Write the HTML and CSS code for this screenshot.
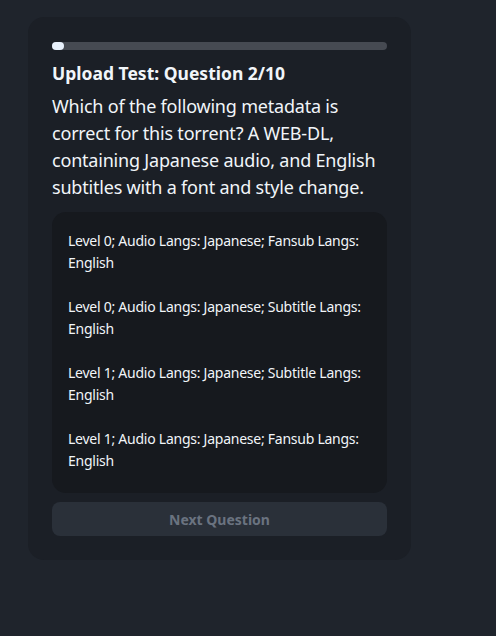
FILE: index.html
```html
<!DOCTYPE html>
<html lang="en">

<head>
    <meta charset="UTF-8" />
    <title>Upload Test</title>
    <link rel="stylesheet" href="styles.css">
</head>

<body>
    <div class="quiz-card">
        <!-- Progress through the test -->
        <div class="progress">
            <div class="progress-fill"></div>
        </div>

        <h2 class="quiz-title">Upload Test: Question 2/10</h2>
        <p class="quiz-question">Which of the following metadata is correct for this torrent? A WEB-DL, containing Japanese audio, and English subtitles with a font and style change.</p>

        <div class="answers">
            <div class="answer">Level 0; Audio Langs: Japanese; Fansub Langs: English</div>
            <div class="answer">Level 0; Audio Langs: Japanese; Subtitle Langs: English</div>
            <div class="answer">Level 1; Audio Langs: Japanese; Subtitle Langs: English</div>
            <div class="answer">Level 1; Audio Langs: Japanese; Fansub Langs: English</div>
        </div>

        <button class="next-btn" disabled>Next Question</button>
    </div>
</body>

</html>
```

FILE: styles.css
```css
html,
body {
    margin: 0;
    padding: 0;
    height: 100%;
    background: #1f242c;
    font-family: 'Noto Sans', sans-serif;
    color: #f1f5f9;
}

* {
    box-sizing: border-box;
}

body {
    padding: 17px 0 0 28px;
}

/* Main card */
.quiz-card {
    width: 383px;
    padding: 25px 24px 24px;
    background: #1b1f26;
    border-radius: 16px;
}

.progress {
    height: 8px;
    border-radius: 4px;
    background: #464a52;
}

.progress-fill {
    width: 12px;
    height: 100%;
    border-radius: 4px;
    background: #e8f1fb;
}

.quiz-title {
    margin: 11px 0 0;
    font-size: 17.5px;
    font-weight: bold;
    line-height: 24px;
}

.quiz-question {
    margin: 8px 0 0;
    font-size: 18px;
    line-height: 27px;
    letter-spacing: -0.2px;
}

/* Answer list */
.answers {
    display: flex;
    flex-direction: column;
    gap: 22px;
    margin-top: 11px;
    padding: 18px 16px 21px;
    background: #16191e;
    border-radius: 14px;
}

.answer {
    font-size: 14px;
    line-height: 22px;
    letter-spacing: -0.25px;
}

.next-btn {
    display: block;
    width: 100%;
    height: 34px;
    margin-top: 9px;
    border: none;
    border-radius: 8px;
    background: #2a3039;
    color: #6a7380;
    font-family: inherit;
    font-size: 14px;
    font-weight: bold;
}
```
